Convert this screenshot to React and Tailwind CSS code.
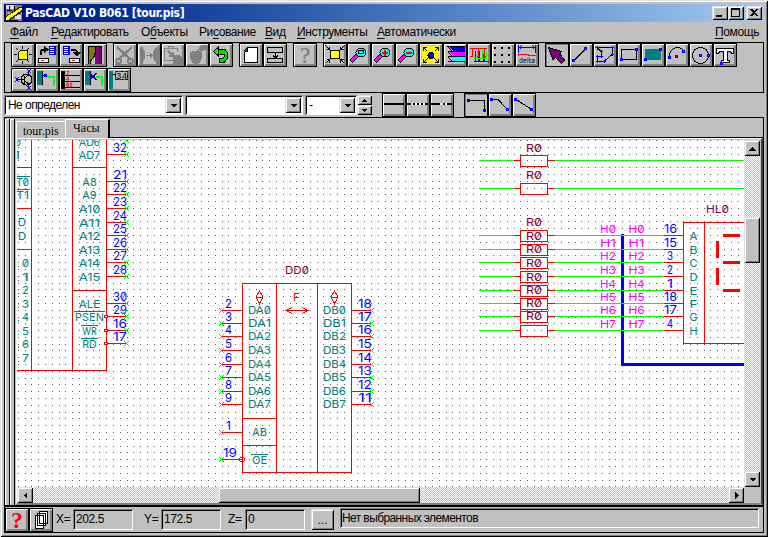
import React from "react";

const K = "#000", B = "#0000ff", R = "#ff0000", G = "#00ff00", T = "#008080", M = "#ff00ff", N = "#808080";

/* ---------- small drawing helpers ---------- */
const P = ({ d, s = K, f = "none", w = 1 }) => <path d={d} stroke={s} fill={f} strokeWidth={w} />;
const Q = ({ x, y, w, h, f = K, s }) => <rect x={x} y={y} width={w} height={h} fill={f} stroke={s} />;
const Node = ({ x, y, f = R }) => <><Q x={x - 1} y={y - 1} w={3} h={3} f={B} /><Q x={x} y={y} w={1} h={1} f={f} /></>;

const Page = ({ x }) => (
  <>
    <Q x={x} y={3} w={7} h={9} f={B} />
    <Q x={x + 1} y={4} w={4} h={7} f="#fff" />
    <P d={`M${x + 1} 5.5h4M${x + 1} 7.5h5M${x + 1} 9.5h5`} s={B} />
  </>
);
const Disk = ({ x }) => (
  <>
    <Q x={x + 0.5} y={15.5} w={10} h={4} f="#fff" s={K} />
    <Q x={x + 3} y={17} w={3} h={1} f={R} />
  </>
);
const Lens = ({ children }) => (
  <>
    <P d="M4 18.500L10.500 12" w={4} />
    <P d="M4.500 18L10 12.500" s={M} w={3} />
    <ellipse cx="14" cy="9.5" rx="5" ry="4.5" fill="#00ffff" stroke={K} />
    {children}
  </>
);

const ICONS = {
  sun: <><P d="M11.5 3v3M11.5 18v3M3 11.5h3M18 11.5h3M5 5l2 2M16 7l2-2M5 19l2-2M16 17l2 2" /><P d="M9.500 7.500h7v9h-9v-7z" f="#ffff00" /></>,
  load: <><Page x={14} /><P d="M5.5 12V8.5l2-2H11" w={2} /><P d="M9.500 3.5l3.500 3-3.500 3z" f={K} /><Disk x={3} /></>,
  save: <><Page x={4} /><P d="M12 6.5h4l2 2V10" w={2} /><P d="M15 9.5h6l-3 3z" f={K} /><Disk x={10} /></>,
  door: <><Q x={5} y={3} w={14} h={18} f="#800080" /><P d="M5 3h8v4l-1 1v5l-4 5v3H5z" s="none" f="#808000" /><P d="M8 21v-3l4-5v8z" s="none" f="#c0c0c0" /><P d="M5.5 21V3.500h13V21M12.500 4v4l-1 5-4 5v3" /></>,
  cut: <><P d="M4 4l14 13M19 4L5 17" s={N} w={2.4} /><ellipse cx="5.5" cy="18" rx="2.5" ry="2" fill="none" stroke={N} strokeWidth="2" /><ellipse cx="17.5" cy="18" rx="2.5" ry="2" fill="none" stroke={N} strokeWidth="2" /></>,
  mirror: <><P d="M3 4h2v16H3zM5 5c4 4 4 10 0 14z" s={N} f={N} /><P d="M21 4h-2v16h2zM19 5c-4 4-4 10 0 14z" s={N} f={N} /><P d="M9 12.5h6M13 10.5l2 2-2 2" s={N} /></>,
  paste: <><P d="M12 17.500H3.500V5.500h13V9M7.500 5V3.500h5V5" s={N} w={1.6} /><P d="M7 8l5 5M12 9v4H8" s={N} w={1.6} /><P d="M12 12h6l3 3v6h-9z" s="none" f={N} /></>,
  fruit: <><P d="M5 10c2-2 11-2 12 0 0 5-2 10-4 10H9c-2 0-4-5-4-10z" s={N} f={N} /><P d="M12 9c1-2 2-3 3-4M14 6c0-3 3-4 8-4 0 4-2 6-7 5z" s={N} f={N} /></>,
  undo: <><P d="M8 6.500h8l2.500 3v6l-3 3.500h-5v-3.500h3l1.500-1.500v-3H8z" f="#00e000" /><P d="M4.500 8.500L9.500 4v9z" f={G} /></>,
  blank: <><P d="M5.500 7.500l3-3h10v15h-13z" f="#fff" /><P d="M5 8.500h4v-4z" f={T} s="none" /><P d="M5.500 8.500h3v-4" /></>,
  split: <><P d="M4.500 4.500h15v5h-15zM4.500 15.500h15v4h-15zM12.500 9v6M10 12.500l2.500 2.500 2.500-2.500" /></>,
  fit: <><Q x={7.5} y={7.5} w={9} h={8} f="#ffff00" s={K} /><P d="M2.500 2.500l4 4M21.500 2.500l-4 4M2.500 20.500l4-4M21.500 20.500l-4-4M3.500 6.500h3v-3M20.500 6.500h-3v-3M3.500 16.500h3v3M20.500 16.500h-3v3" /></>,
  lens: <Lens><Q x={11.5} y={7.5} w={5} h={3} f="none" s={K} /></Lens>,
  plus: <Lens><P d="M11 9.500h6M14 6.500v6" s={R} w={2} /></Lens>,
  minus: <Lens><P d="M11 9.500h6" s={R} w={2} /></Lens>,
  full: <><Q x={3} y={3} w={18} h={18} f="#ffff00" /><circle cx="12" cy="12.500" r="3" fill={B} stroke={K} /><P d="M4.500 4.500l4 4M19.500 4.500l-4 4M4.500 19.500l4-4M19.500 19.500l-4-4M4.500 8V4.500H8M16 4.500h3.500V8M4.500 16v3.500H8M16 19.500h3.500V16" /></>,
  layers: <><Q x={6} y={2} w={16} h={1} f="#ffff00" /><P d="M5 3h17v5H10z" f={B} s="none" /><P d="M5 8h17v5H10z" f={M} s="none" /><P d="M5 13h17v5H10z" f="#00ffff" s="none" /><P d="M4 3.500h18M5 8.500h17M5 13.500h17M5 18.500h17M5 4l4 4M5 9l4 4M5 14l4 4" /></>,
  ribs: <><P d="M8.500 8v10.500h12M12.500 8v10M17.500 8v10M7 18.500h15M11 11v8M16 11v8" s={B} /><P d="M7 15.500h13M10.500 7v9M15.500 7v9M19.500 9v8" s={G} w={1.500} /><P d="M3 5.500h17M3 13.500h3M5.500 5v9M11.500 5v9M17.500 5v9M10 13.500h3M16 13.500h3" s={R} w={1.600} /></>,
  dots: <>{[4, 11, 18].map((y) => [3, 10, 17].map((x) => <Q key={`${x}-${y}`} x={x} y={y} w={2} h={2} />))}</>,
  delta: <><P d="M3.500 2v8M20.500 2v8M4 4.500h16M6.500 2.500l-2 2 2 2M17.500 2.500l2 2-2 2" s={B} /><P d="M3 12.500l1-1h8l3 1h6" s={R} /><text x="4" y="20" fontSize="7.5" fontFamily="DejaVu Sans" textLength="16" lengthAdjust="spacingAndGlyphs">delta</text></>,
  arrow: <P d="M3.500 4.500l13 4-2 2.500 5.500 6-3.500 3.500-6-6-2.500 2.500z" f="#800080" />,
  line: <><P d="M5 17.500L17 5.500" /><Node x={4} y={17} /><Node x={16} y={5} /></>,
  poly: <><P d="M4 4.500h15v7l-8 7H4v-5h4v-5z" /><P d="M2 4.500h4M4.500 3v4M17 4.500h4M19.500 3v4M18 11.500h3M19.500 10v3M10 18.500h3M11.500 17v3M3 18.500h3M4.500 17v3M3 13.500h3M4.500 12v3M7 13.500h3M8.500 12v3M7 8.500h3M8.500 7v3" s={B} /></>,
  box: <><P d="M4.500 6.500h15v10h-15z" /><Node x={4} y={16} /><Node x={19} y={6} /></>,
  fillbox: <><Q x={4} y={6} w={16} h={11} f={T} /><Node x={4} y={16} /><Node x={19} y={6} /></>,
  arc: <><P d="M4.500 14c0-11 11-11 14-6" /><Node x={4} y={14} /><Node x={11} y={13} /><Node x={18} y={8} /></>,
  circle: <><circle cx="11.500" cy="12.500" r="8" fill="none" stroke={K} /><Node x={11} y={12} /><Node x={19} y={12} /></>,
  text: <><P d="M3.500 5.500h17v5h-2l-1-2h-3v9h2v2h-8v-2h2v-9h-4l-1 2h-2z" f="#fff" /><Node x={8} y={20} /></>,
  trans: <><circle cx="15.500" cy="11.500" r="5.500" fill="none" stroke={K} /><P d="M7 11.500h6M13.500 8v8M14 10l3.500-3V4M14 13l3.500 3v3" /><P d="M4 9l4 5M8 9l-4 5M16 1l4 4M20 1l-4 4M16 18l4 4M20 18l-4 4" s={B} /></>,
  pin: <><Q x={2} y={3} w={5} h={14} f={T} /><P d="M7 3v14M7 7.500h4" /><Q x={9} y={6} w={3} h={3} f={B} /><P d="M12 8.500h7V18" s={G} w={2} /></>,
  nums: <><Q x={2} y={3} w={4} h={18} /><P d="M6 7.500h15M6 13.500h15M6 19.500h15" /><g fill={R} fontFamily="DejaVu Sans Mono" fontWeight="bold" fontSize="6"><text x="7" y="6.500">7</text><text x="7" y="12.500">4</text><text x="7" y="18.500">01</text></g></>,
  pinx: <><Q x={2} y={3} w={5} h={14} f={T} /><P d="M7 3v14M7 8.500h5" /><P d="M7 5l6 7M13 5l-6 7" s={B} w={1.500} /><P d="M13 8.500h6V18" s={G} w={2} /></>,
  n34: <><Q x={2} y={3} w={4} h={18} f={T} /><P d="M8.500 3.500h12v8h-12z" s={R} /><path d="M8.500 3.500h12v8h-12z" fill="none" stroke={K} strokeDasharray="2 3" /><P d="M6 6.500h3" /><text x="9" y="11" fontSize="9.500" fontFamily="Liberation Sans" textLength="11">34</text></>,
  solid: <P d="M2 11h20" w={2} />,
  dash1: <><P d="M2 11h20" w={2} s="#fff" /><P d="M1 11h4M7 11h2M11 11h2M15 11h2M19 11h3" w={2} /></>,
  dash2: <><P d="M2 11h20" w={2} s="#fff" /><P d="M1 11h9M13 11h2M17 11h5" w={2} /></>,
  ortho: <><P d="M4 7.500h16.500V17" /><Node x={4} y={7} f={B} /><Node x={20} y={17} f={B} /></>,
  bent: <><P d="M4 6.500h6L19 16" /><Node x={3} y={6} f={B} /><Node x={19} y={16} f={B} /></>,
  diag: <><P d="M4 6.500L19 16" /><Node x={3} y={6} f={B} /><Node x={19} y={16} f={B} /></>,
  pages: <><P d="M10.500 3.500h8v12h-8zM8.500 5.500h8v12h-8zM6.500 7.500h8v13h-8z" f="#fff" /></>,
};

const RAISED = "shadow-[inset_1px_1px_0_#fff,inset_-2px_-2px_0_#808080]";
const WIN = "shadow-[inset_1px_1px_0_#dfdfdf,inset_-1px_-1px_0_#000,inset_2px_2px_0_#fff,inset_-2px_-2px_0_#808080]";
const SUNK = "shadow-[inset_1px_1px_0_#808080,inset_-1px_-1px_0_#fff,inset_2px_2px_0_#000]";
const CHECK = "bg-[repeating-conic-gradient(#c0c0c0_0_25%,#fff_0_50%)] bg-[length:2px_2px]";

function Tool({ icon, pressed }) {
  return (
    <div className="h-6 w-6 shrink-0 border border-black">
      <div className={`h-full w-full bg-[#c0c0c0] ${pressed ? "shadow-[inset_1px_1px_0_#808080]" : RAISED}`}>
        {icon === "help" || icon === "helpRed" ? (
          <div className={`flex h-[22px] items-center justify-center font-['Liberation_Serif',serif] text-[23px] leading-none ${icon === "help" ? "font-normal text-[#808080] [-webkit-text-stroke:0.5px_#808080]" : "font-bold text-[#ff0000]"}`}>?</div>
        ) : (
          <svg viewBox="1 1 22 22" className="h-[22px] w-[22px]" shapeRendering="crispEdges">{ICONS[icon]}</svg>
        )}
      </div>
    </div>
  );
}
const Group = ({ items, pressed }) => (
  <div className="flex">{items.map((i) => <Tool key={i} icon={i} pressed={i === pressed} />)}</div>
);

const Tri = ({ d, className = "h-[7px] w-[7px]" }) => (
  <svg viewBox="0 0 7 7" className={className} shapeRendering="crispEdges"><path d={d} /></svg>
);
const DOWN = "M0 2h7L3.500 5.500z", UP = "M0 5.500h7L3.500 2z", LEFT = "M5 0v7L1.500 3.500z", RIGHT = "M2 0v7l3.500-3.500z";

function Combo({ className, children }) {
  return (
    <div className={`flex h-5 bg-white p-[2px] ${SUNK} ${className}`}>
      <div className="min-w-0 flex-1 pl-[2px] text-[12px] leading-[17px] tracking-[-0.55px] whitespace-nowrap">{children}</div>
      <div className={`flex h-4 w-4 items-center justify-center bg-[#c0c0c0] ${WIN}`}><Tri d={DOWN} /></div>
    </div>
  );
}

const MENU = [
  ["", "Ф", "айл", "w-[41px]"], ["", "Р", "едактировать", "w-[90px]"], ["О", "б", "ъекты", "w-[58px]"], ["Ри", "с", "ование", "w-[66px]"],
  ["", "В", "ид", "w-[32px]"], ["", "И", "нструменты", "w-[80px]"], ["", "А", "втоматически", "w-[90px]"],
];
const MenuText = ({ pre, hot, rest }) => <span>{pre}<u className="underline-offset-2">{hot}</u>{rest}</span>;

/* ---------- schematic ---------- */
function Label({ x, y, w, c = T, size = 11, over, children }) {
  return (
    <>
      <text x={x} y={y} fill={c} fontSize={size} textLength={w} lengthAdjust="spacingAndGlyphs">{children}</text>
      {over && <P d={`M${x - 1} ${y - 9.5}h${w + 2}`} s={c} />}
    </>
  );
}
const Cross = ({ x, y }) => (
  <>
    {[[-2, -2], [-1, -1], [0, 0], [1, 1], [2, 2], [2, -2], [1, -1], [-1, 1], [-2, 2]].map(([i, j]) => (
      <Q key={`${i},${j}`} x={x + i} y={y + j} w={1} h={1} f={G} />
    ))}
  </>
);

const LEFT_PINS = [
  [154, "32", "AD7"], [181, "21", "A8"], [194, "22", "A9"], [208, "23", "A10"], [222, "24", "A11"], [235, "25", "A12"],
  [249, "26", "A13"], [262, "27", "A14"], [276, "28", "A15"], [303, "30", "ALE"], [316, "29", "PSEN", 1], [330, "16", "WR", 1], [343, "17", "RD", 1],
];
const DD_Y = [310, 323, 336, 350, 364, 377, 391, 404];
const R_Y = [235, 249, 262, 276, 290, 303, 316, 330];
const HL_NUM = ["16", "15", "3", "2", "1", "18", "17", "4"];

function Grid() {
  let d = "";
  for (let j = 0; j < 52; j++) {
    const y = Math.floor(140.5 + j * 6.79);
    for (let i = 0; i < 108; i++) d += `M${Math.floor(18.4 + i * 6.79)} ${y}h1v1h-1z`;
  }
  return <path d={d} fill="#606060" />;
}

function Resistor({ y, end }) {
  return (
    <>
      <P d={`M479 ${y + 0.5}h35M555 ${y + 0.5}H${end}`} s={G} />
      <P d={`M514 ${y + 0.5}h6M548 ${y + 0.5}h7M520.500 ${y - 4.5}h27v11h-27z`} s={R} />
    </>
  );
}

function Schematic() {
  return (
    <svg viewBox="17 140 727 347" width="727" height="347" className="block bg-white font-['Inter',sans-serif] [font-feature-settings:'zero']" shapeRendering="crispEdges">
      <Grid />
      {/* processor */}
      <P d="M31.500 140V370M72.500 140V370M106.500 140V370M17 370.500H107M17 167.500h14M17 208.500h14M17 249.500h14M72 167.500h34M72 290.500h34" s={R} />
      {LEFT_PINS.map(([y, n, t, inv]) => {
        const w = t.length * 7.2;
        return (
          <g key={n + t}>
            <P d={`M107 ${y + 0.5}h20`} s={R} />
            {inv && <circle cx="106" cy={y + 0.5} r="1.500" fill="#fff" stroke={R} />}
            <Label x={113} y={y - 2} w={14} c={B} size={12}>{n}</Label>
            <Cross x={126} y={y} />
            <Label x={89.5 - w / 2} y={y + 5} w={w} over={inv}>{t}</Label>
          </g>
        );
      })}
      <Label x={79} y={146} w={21}>AD6</Label>
      <Cross x={126} y={140} />
      <Label x={14} y={146} w={7}>0</Label>
      <Label x={14} y={159} w={6}>1</Label>
      <Label x={16} y={186} w={13} over>T0</Label>
      <Label x={16} y={199} w={13} over>T1</Label>
      <Label x={18} y={226} w={8}>D</Label>
      <Label x={18} y={240} w={8}>D</Label>
      {[0, 1, 2, 3, 4, 5, 6, 7].map((n) => (
        <g key={n}><Q x={18} y={Math.round(266 + n * 13.5)} w={1} h={1} f={T} /><Label x={22} y={Math.round(267 + n * 13.5)} w={7}>{n}</Label></g>
      ))}
      {/* DD0 */}
      <Label x={285} y={274} w={24} c="#800040">DD0</Label>
      <P d="M242.500 283.500h109v189h-109zM276.500 283v189M317.500 283v189M242 418.500h34M242 445.500h34" s={R} />
      <P d="M259.500 291l3.500 6-3.500 6.500-3.500-6.500zM256 297.500h7M334.500 291l3.500 6-3.500 6.500-3.500-6.500zM331 297.500h7M286 310.500h22M292 307.500l-6 3 6 3M302 307.500l6 3-6 3" s={R} />
      <Label x={293} y={301} w={7} c={R} size={11}>F</Label>
      {DD_Y.map((y, i) => (
        <g key={y}>
          <P d={`M222 ${y + 0.5}h20M352 ${y + 0.5}h20`} s={R} />
          <Label x={225} y={y - 2} w={7} c={B} size={12}>{i + 2}</Label>
          <Label x={358} y={y - 2} w={14} c={B} size={12}>{18 - i}</Label>
          <Cross x={221} y={y} /><Cross x={371} y={y} />
          <Label x={248} y={y + 4} w={23}>{`DA${i}`}</Label>
          <Label x={323} y={y + 4} w={23}>{`DB${i}`}</Label>
        </g>
      ))}
      <P d="M222 432.500h20M222 459.500h20" s={R} />
      <Cross x={221} y={432} /><Cross x={221} y={459} />
      <circle cx="242" cy="459.500" r="2.500" fill="none" stroke={R} />
      <Label x={226} y={430} w={5} c={B} size={12}>1</Label>
      <Label x={223} y={457} w={14} c={B} size={12}>19</Label>
      <Label x={252} y={436} w={15}>AB</Label>
      <Label x={252} y={464} w={15} over>OE</Label>
      {/* resistors */}
      {[160, 188].map((y) => <Resistor key={y} y={y} end={744} />)}
      {R_Y.map((y) => <Resistor key={y} y={y} end={664} />)}
      {[152, 179, 226, 240, 253, 267, 281, 294, 307, 320].map((y) => <Label key={y} x={526} y={y} w={16} c="#800040">R0</Label>)}
      {/* bus */}
      <P d="M622.500 234V364.500H744" s={B} w={3} />
      <P d="M683.500 222.500H744M683.500 222V343.500H744M704.500 222v121" s={R} />
      {R_Y.map((y, i) => (
        <g key={y}>
          <P d={`M618 ${y + 0.5}h10`} s={G} />
          <P d={`M664 ${y + 0.5}h19`} s={R} />
          <Label x={600} y={y - 2} w={16} c={M}>{`H${i}`}</Label>
          <Label x={628.5} y={y - 2} w={16} c={M}>{`H${i}`}</Label>
          <Label x={HL_NUM[i].length > 1 ? 664 : 667} y={y - 2} w={HL_NUM[i].length > 1 ? 13 : 6} c={B} size={12}>{HL_NUM[i]}</Label>
          <Label x={689.5} y={y + 5} w={8}>{"ABCDEFGH"[i]}</Label>
        </g>
      ))}
      <Label x={706} y={213} w={23} c="#800040">HL0</Label>
      <P d="M723 235.500h17M723 262.500h17M723 290.500h17M717.500 241v17M717.500 268v17" s={R} w={3} />
    </svg>
  );
}

const Field = ({ label, value }) => (
  <>
    <span className="pt-[3px] pl-px text-[12px] leading-[14px] tracking-[-0.3px]">{label}</span>
    <div className={`h-[21px] w-[60px] pt-[3px] pl-[3px] text-[12px] leading-[14px] tracking-[-0.4px] ${SUNK}`}>{value}</div>
  </>
);

export default function App() {
  return (
    <div className="h-[537px] w-[768px] overflow-hidden bg-[#c0c0c0] font-['Liberation_Sans',sans-serif] text-black">
      <div className={`flex h-full flex-col p-1 ${WIN}`}>
        <div className="flex h-[18px] shrink-0 items-center bg-gradient-to-r from-[#000080] to-[#a6caf0] pr-[2px] pl-[2px]">
          <svg viewBox="0 0 16 16" className="h-4 w-4" shapeRendering="crispEdges">
            <rect width="16" height="16" fill="#808080" />
            <path d="M0 0h8v4H0zM9 10h6v4H9zM2 8h3v3H2z" fill="#dfdfdf" /><path d="M1 5.500h5M8.500 1v6M2 10.500h4M10 5.500h5M3 15.500h9M3.500 1v4" stroke="#000" />
            <path d="M0 11L13 2h3v5L3 16H0z" fill="#202020" /><path d="M0 12L14 3h2v2L2 15H0z" fill="#ffff00" />
          </svg>
          <span className="ml-[3px] flex-1 font-['DejaVu_Sans_Condensed','DejaVu_Sans',sans-serif] text-[12px] leading-[18px] font-bold tracking-[-0.32px] whitespace-nowrap text-white">PasCAD V10 B061 [tour.pis]</span>
          <div className="flex">
            {["M4 9h6v2H4z", "M3 2h9v9H3zM4 4v6h7V4z", "M4 3h2l2 2 2-2h2L9 6.500 12 10h-2L8 8l-2 2H4l3-3.500z"].map((d, i) => (
              <div key={d} className={`h-[14px] w-4 bg-[#c0c0c0] ${WIN} ${i === 2 ? "ml-[2px]" : ""}`}>
                <svg viewBox="0 0 16 14" className="h-[14px] w-4" shapeRendering="crispEdges"><path d={d} fillRule="evenodd" /></svg>
              </div>
            ))}
          </div>
        </div>

        <div className="flex h-5 shrink-0 items-center pl-[6px] text-[12px] tracking-[-0.4px] whitespace-nowrap">
          {MENU.map(([pre, hot, rest, w]) => <div key={rest} className={w}><MenuText pre={pre} hot={hot} rest={rest} /></div>)}
          <div className="ml-auto pr-[5px]"><MenuText hot="П" rest="омощь" /></div>
        </div>

        <div className="flex h-[51px] shrink-0 flex-col gap-px border border-black pl-[6px]">
          <div className="flex gap-[6px]">
            <Group items={["sun", "load", "save", "door"]} />
            <Group items={["cut", "mirror", "paste", "fruit", "undo"]} />
            <Group items={["blank", "split"]} />
            <Group items={["help"]} />
            <Group items={["fit", "lens", "plus", "minus", "full", "layers", "ribs", "dots", "delta"]} />
            <Group items={["arrow", "line", "poly", "box", "fillbox", "arc", "circle", "text"]} pressed="arrow" />
          </div>
          <Group items={["trans", "pin", "nums", "pinx", "n34"]} />
        </div>

        <div className="flex h-6 shrink-0 items-center">
          <Combo className="w-[179px]">Не определен</Combo>
          <Combo className="ml-[2px] w-[118px]" />
          <Combo className="ml-[2px] w-[52px]">-</Combo>
          <div className="flex w-[15px] flex-col">
            <div className={`flex h-[10px] items-center justify-center ${WIN}`}><Tri d={UP} className="h-[5px] w-[5px]" /></div>
            <div className={`flex h-[10px] items-center justify-center ${WIN}`}><Tri d={DOWN} className="h-[5px] w-[5px]" /></div>
          </div>
          <div className="ml-[10px]"><Group items={["solid", "dash1", "dash2"]} /></div>
          <div className="ml-[10px]"><Group items={["ortho", "bent", "diag"]} pressed="ortho" /></div>
        </div>

        <div className="flex h-[390px] shrink-0 border border-b-2 border-black">
          <div className="mt-px w-[5px] border-r border-black shadow-[inset_1px_1px_0_#fff]" />
          <div className="mt-px w-[5px] border-r border-black shadow-[inset_1px_1px_0_#fff]" />
          <div className="flex min-w-0 flex-1 flex-col pl-px">
            <div className="flex h-[20px] items-end font-['Liberation_Serif',serif] text-[12px] leading-[16px]">
              <div className="h-[17px] w-[49px] border-t border-l border-white pt-px pl-[6px]">tour.pis</div>
              <div className="h-[19px] w-[45px] border-t border-r-2 border-l border-t-white border-r-black border-l-white pl-[7px]">Часы</div>
              <div className="flex-1 self-stretch border-b border-black" />
            </div>
            <div className="flex flex-1 flex-col border-t border-r-2 border-b-2 border-l border-t-white border-r-[#404040] border-b-[#808080] border-l-white pt-px">
              <div className="flex h-[347px]">
                <Schematic />
                <div className={`flex w-4 flex-col ${CHECK}`}>
                  <div className={`flex h-4 items-center justify-center bg-[#c0c0c0] ${WIN}`}><Tri d={UP} /></div>
                  <div className={`mt-[61px] h-[46px] bg-[#c0c0c0] ${WIN}`} />
                  <div className={`mt-auto flex h-4 items-center justify-center bg-[#c0c0c0] ${WIN}`}><Tri d={DOWN} /></div>
                </div>
              </div>
              <div className="flex h-4">
                <div className={`flex w-[727px] ${CHECK}`}>
                  <div className={`flex w-4 items-center justify-center bg-[#c0c0c0] ${WIN}`}><Tri d={LEFT} /></div>
                  <div className={`ml-[185px] w-[202px] bg-[#c0c0c0] ${WIN}`} />
                  <div className={`ml-auto flex w-4 items-center justify-center bg-[#c0c0c0] ${WIN}`}><Tri d={RIGHT} /></div>
                </div>
              </div>
            </div>
          </div>
        </div>

        <div className="flex h-[26px] shrink-0 items-start border-x border-b border-black pt-px">
          <Group items={["helpRed", "pages"]} />
          <div className="grid grid-cols-[18px_70px_18px_66px_18px_66px] pt-px pl-[2px]">
            <Field label="X=" value="202.5" />
            <Field label="Y=" value="172.5" />
            <Field label="Z=" value="0" />
          </div>
          <div className={`mt-px flex h-[21px] w-[23px] items-center justify-center text-[12px] ${WIN}`}>...</div>
          <div className={`ml-[6px] h-5 w-[419px] pt-[3px] pl-[2px] text-[12px] leading-[14px] tracking-[-0.6px] whitespace-nowrap ${SUNK}`}>Нет выбранных элементов</div>
        </div>
      </div>
    </div>
  );
}
